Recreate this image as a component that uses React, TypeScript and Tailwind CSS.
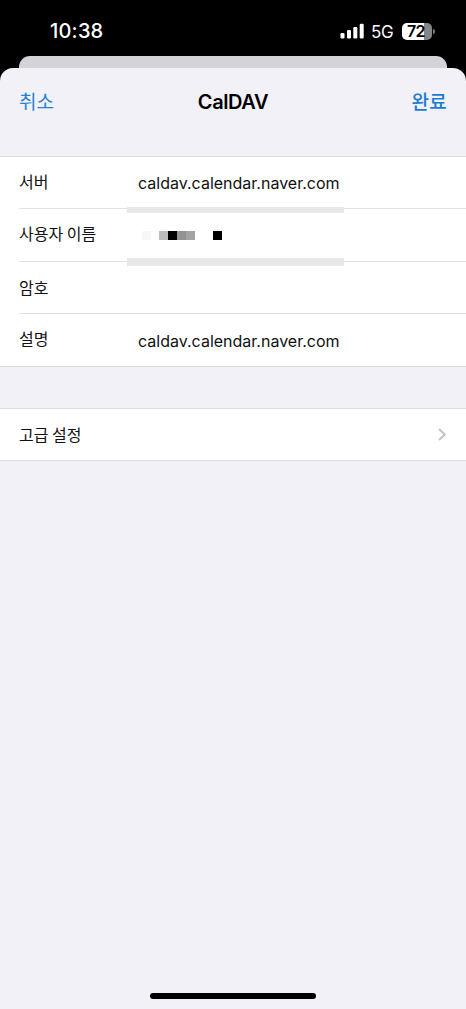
import type { ReactNode } from 'react';

const latin = "font-['Inter','Noto_Sans_CJK_KR',sans-serif]";
const korean = "font-['Noto_Sans_CJK_KR',sans-serif]";

function StatusBar() {
  return (
    <div className="flex h-[56px] shrink-0 items-start justify-between pt-[19px] pr-[31px] pl-[50px] text-white">
      <span className="text-[20px] leading-[25px] font-medium tracking-[0.2px]">10:38</span>
      <div className="flex h-[24px] items-center">
        <svg width="24" height="16" viewBox="0 0 24 16" fill="#fff" className="mr-[7px]">
          <rect x="0.5" y="10" width="4" height="5.5" rx="1.2" />
          <rect x="7" y="7" width="4" height="8.5" rx="1.2" />
          <rect x="13.3" y="4" width="4" height="11.5" rx="1.2" />
          <rect x="19.7" y="0.8" width="4" height="14.7" rx="1.2" />
        </svg>
        <span className="mr-[9px] w-[22px] pt-[1px] text-[17px] leading-[24px] tracking-[-0.4px]">5G</span>
        <div className="flex h-[17px] w-[30px] items-center justify-center rounded-[5px] bg-linear-to-r from-white from-73% to-[#858585] to-73% pr-[2px] text-[16px] leading-[17px] font-semibold tracking-[-0.6px] text-black">
          72
        </div>
        <div className="ml-[1px] h-[5px] w-[2px] rounded-r-full bg-[#777]" />
      </div>
    </div>
  );
}

type RowProps = { label: string; labelOffset?: string; children?: ReactNode; last?: boolean };

function Row({ label, labelOffset = '', children, last = false }: RowProps) {
  return (
    <div className="flex min-h-0 flex-1 pl-[19px]">
      <div className={`flex flex-1 items-center ${last ? '' : 'border-b border-[#e2e2e4]'}`}>
        <span className={`${korean} ${labelOffset} w-[119px] text-[16px] leading-[24px]`}>{label}</span>
        {children}
      </div>
    </div>
  );
}

function RedactedName() {
  return (
    <div className="mt-[2px] ml-[4px] flex h-[9px]">
      <i className="mr-[8px] w-[9px] bg-[#f7f7f7]" />
      <i className="w-[9px] bg-[#bdbdbd]" />
      <i className="w-[9px] bg-black" />
      <i className="w-[9px] bg-[#939393]" />
      <i className="mr-[18px] w-[9px] bg-[#a3a3a3]" />
      <i className="w-[9px] bg-black" />
    </div>
  );
}

function Address({ offset }: { offset: string }) {
  return <span className={`${offset} text-[16px] leading-[22px]`}>caldav.calendar.naver.com</span>;
}

export default function App() {
  return (
    <div className={`${latin} flex h-[1009px] w-[466px] flex-col overflow-hidden bg-black text-[#111]`}>
      <StatusBar />
      <div className="mx-[19px] h-[12px] shrink-0 rounded-t-[11px] bg-[#d4d3d8]" />
      <main className="flex flex-1 flex-col rounded-t-[13px] bg-[#f2f1f8]">
        <header className="grid h-[88px] grid-cols-3 items-start px-[19px] pt-[20px] leading-[26px]">
          <button className={`${korean} justify-self-start text-[19px] leading-[26px] text-[#2482d2]`}>취소</button>
          <h1 className="justify-self-center pt-[1px] text-[20px] font-semibold tracking-[-0.4px] text-black">CalDAV</h1>
          <button className={`${korean} justify-self-end text-[19px] leading-[26px] font-medium tracking-[0.3px] text-[#1a7bd6]`}>완료</button>
        </header>
        <section className="relative flex h-[211px] flex-col border-y border-[#dcdce2] bg-white">
          <Row label="서버" labelOffset="pb-[4px]"><Address offset="pt-[1px]" /></Row>
          <Row label="사용자 이름" labelOffset="pb-[3px]"><RedactedName /></Row>
          <Row label="암호" />
          <Row label="설명" labelOffset="pb-[3px]" last><Address offset="pt-[2px]" /></Row>
          <div className="absolute top-[50px] left-[127px] h-[6px] w-[217px] bg-[#e8e8e8]" />
          <div className="absolute top-[101px] left-[127px] h-[8px] w-[217px] bg-[#e8e8e8]" />
        </section>
        <section className="mt-[41px] flex h-[53px] items-center justify-between border-y border-[#dcdce2] bg-white px-[19px]">
          <span className={`${korean} pb-[2px] text-[16px] leading-[24px]`}>고급 설정</span>
          <svg width="9" height="13" viewBox="0 0 9 13" fill="none" stroke="#c2c2c5" strokeWidth="2">
            <path d="M1 1 6.8 6.5 1 12" />
          </svg>
        </section>
        <div className="mx-auto mt-auto mb-[10px] h-[6px] w-[166px] rounded-full bg-black" />
      </main>
    </div>
  );
}
